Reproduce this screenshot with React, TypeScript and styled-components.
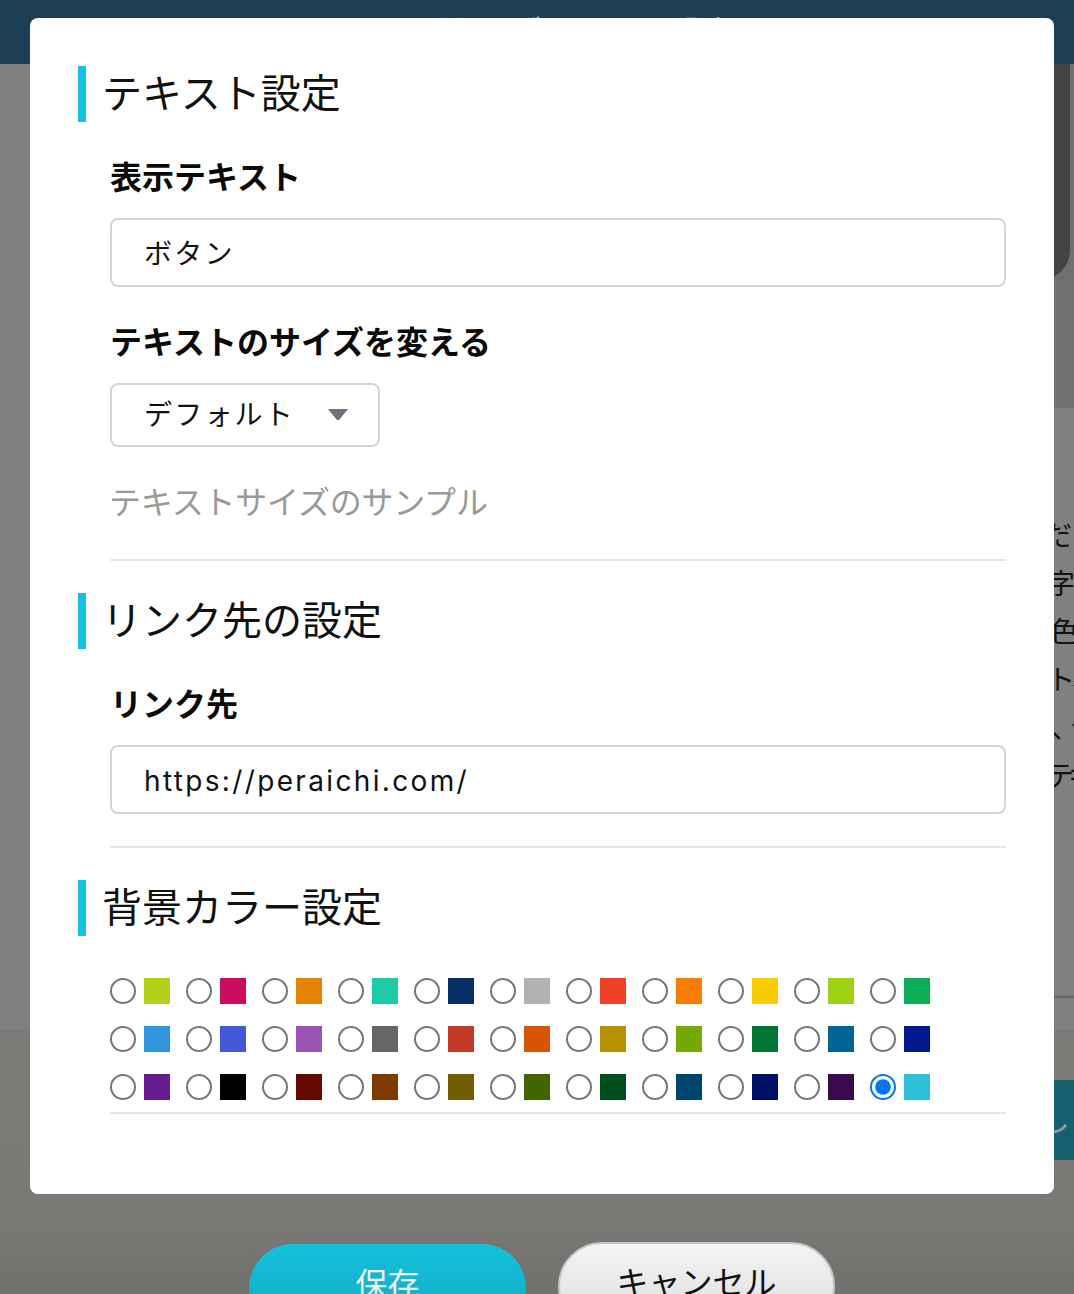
import React, { useState } from 'react';
import styled, { createGlobalStyle } from 'styled-components';

const GlobalStyle = createGlobalStyle`
  html, body {
    margin: 0;
    padding: 0;
    background: #808080;
  }
  * {
    box-sizing: border-box;
  }
`;

const FONT = `Inter, "Noto Sans CJK JP", sans-serif`;

const Page = styled.div`
  position: relative;
  width: 1074px;
  height: 1294px;
  overflow: hidden;
  background: #808080;
  font-family: ${FONT};
  color: #111;
`;

/* page behind the modal */
const Header = styled.header`
  height: 64px;
  padding-left: 415px;
  background: #1d3f56;
  color: #bbb;
  font-size: 32px;
  line-height: 65px;
  white-space: nowrap;
`;

const Hero = styled.section`
  height: 344px;
  margin-left: 400px;
  background: #707070;
`;

const HeroImage = styled.div`
  width: 670px;
  height: 216px;
  background: #444;
  border-bottom-right-radius: 30px;
`;

const Description = styled.section`
  height: 622px;
  padding-top: 104px;
  font-size: 28px;
  line-height: 48px;
  white-space: nowrap;
  color: #111;
`;

const DescriptionLine = styled.div<{ $indent: number; $tight?: number }>`
  padding-left: ${(p) => p.$indent}px;
  letter-spacing: ${(p) => p.$tight ?? 0}px;
`;

const DescriptionRule = styled.hr`
  margin: 196px 0 0 900px;
  border: 0;
  height: 2px;
  background: #666;
`;

const Footer = styled.section`
  height: 264px;
  padding-top: 50px;
  background: linear-gradient(#7c7b77, #7a7975 70%, #71706c);
`;

const NextButton = styled.div`
  width: 100px;
  height: 80px;
  margin-left: 1000px;
  padding-left: 38px;
  background: #14616f;
  color: #999;
  font-size: 32px;
  line-height: 80px;
`;

const FooterActions = styled.div`
  display: flex;
  gap: 32px;
  margin-top: 84px;
  padding-left: 249px;
`;

const PillButton = styled.button<{ $primary?: boolean }>`
  flex: none;
  width: 277px;
  height: 88px;
  padding: 0 0 6px;
  border-radius: 44px;
  font-family: ${FONT};
  font-size: 32px;
  line-height: 48px;
  ${(p) =>
    p.$primary
      ? `
    border: 0;
    align-self: flex-start;
    color: #eee;
    background: linear-gradient(#13c1dd, #14a8c2);
  `
      : `
    margin-top: -2px;
    border: 2px solid #c4c4cc;
    color: #111;
    background: linear-gradient(#f4f4f4, #dcdcdc);
  `}
`;

/* modal */
const Modal = styled.div`
  position: absolute;
  top: 18px;
  left: 30px;
  width: 1024px;
  height: 1176px;
  padding: 48px;
  background: #fff;
  border-radius: 8px;
`;

const SectionTitle = styled.h2`
  margin: 0;
  height: 56px;
  padding-left: 16px;
  border-left: 8px solid #14c1de;
  font-size: 40px;
  font-weight: 400;
  line-height: 56px;
  color: #111;
`;

const Body = styled.div`
  padding: 0 0 0 32px;
`;

const Label = styled.label`
  display: block;
  margin: 32px 0 16px;
  font-size: 32px;
  font-weight: 700;
  line-height: 48px;
  color: #0a0a0a;
`;

const TextInput = styled.input<{ $latin?: boolean }>`
  display: block;
  width: 100%;
  height: 69px;
  padding: ${(p) => (p.$latin ? '2px 32px 0' : '0 32px 2px')};
  border: 2px solid #d0d4de;
  border-radius: 8px;
  background: #fff;
  font-family: ${FONT};
  font-size: 28px;
  letter-spacing: ${(p) => (p.$latin ? 2.35 : 2.2)}px;
  color: #111;
  outline: none;
`;

const SelectWrap = styled.div`
  position: relative;
  width: 270px;
  height: 64px;
`;

const Select = styled.select`
  display: block;
  width: 100%;
  height: 100%;
  padding: 0 32px;
  border: 2px solid #d0d4de;
  border-radius: 8px;
  background: #fff;
  font-family: ${FONT};
  font-size: 28px;
  letter-spacing: 2.2px;
  color: #111;
  appearance: none;
  outline: none;
`;

const Caret = styled.svg`
  position: absolute;
  top: 26px;
  left: 218px;
  width: 20px;
  height: 11px;
  pointer-events: none;
`;

const Sample = styled.p`
  margin: 32px 0 32px -1px;
  font-size: 32px;
  line-height: 48px;
  letter-spacing: -0.2px;
  color: #999;
`;

const Divider = styled.hr`
  margin: 0 0 32px;
  border: 0;
  height: 2px;
  background: #e5e5e5;
`;

const InputDivider = styled(Divider)`
  margin-top: 32px;
`;

const ColorGrid = styled.div`
  display: grid;
  grid-template-columns: repeat(11, 76px);
  row-gap: 22px;
  margin-top: 42px;
`;

const ColorOption = styled.label`
  display: flex;
  align-items: center;
  gap: 8px;
  height: 26px;
`;

const Radio = styled.input`
  flex: none;
  zoom: 2;
  width: 13px;
  height: 13px;
  margin: 0;
`;

const Swatch = styled.span<{ $color: string }>`
  flex: none;
  width: 26px;
  height: 26px;
  background: ${(p) => p.$color};
`;

const GridDivider = styled(Divider)`
  margin-top: 12px;
`;

const COLORS = [
  '#b5d01b', '#cb0c60', '#e68200', '#1dcba7', '#062f66', '#b2b2b2', '#f04028', '#f97d00', '#fbcb02', '#9dd313', '#09ae56',
  '#3097de', '#4258d7', '#9a55b4', '#666666', '#c03a26', '#d75400', '#b79200', '#74a900', '#007534', '#006595', '#00198f',
  '#651d90', '#000000', '#640800', '#7d3b00', '#725e00', '#436500', '#004d1e', '#00456c', '#001066', '#380b4f', '#2cc1d9',
];

const App: React.FC = () => {
  const [bgColor, setBgColor] = useState<string>('#2cc1d9');
  const [label, setLabel] = useState<string>('ボタン');
  const [link, setLink] = useState<string>('https://peraichi.com/');

  return (
    <Page>
      <GlobalStyle />
      <Header>ボタンブロックの設定</Header>
      <Hero>
        <HeroImage />
      </Hero>
      <Description>
        <DescriptionLine $indent={1044}>だ</DescriptionLine>
        <DescriptionLine $indent={1047}>字</DescriptionLine>
        <DescriptionLine $indent={1050}>色</DescriptionLine>
        <DescriptionLine $indent={1047} $tight={-3}>ト、</DescriptionLine>
        <DescriptionLine $indent={1051} $tight={-9}>、テ</DescriptionLine>
        <DescriptionLine $indent={1046} $tight={-6}>テキ</DescriptionLine>
        <DescriptionRule />
      </Description>
      <Footer>
        <NextButton>し</NextButton>
        <FooterActions>
          <PillButton $primary>保存</PillButton>
          <PillButton>キャンセル</PillButton>
        </FooterActions>
      </Footer>

      <Modal>
        <SectionTitle>テキスト設定</SectionTitle>
        <Body>
          <Label htmlFor="label-text">表示テキスト</Label>
          <TextInput id="label-text" value={label} onChange={(e) => setLabel(e.target.value)} />
          <Label htmlFor="label-size">テキストのサイズを変える</Label>
          <SelectWrap>
            <Select id="label-size" defaultValue="default">
              <option value="default">デフォルト</option>
            </Select>
            <Caret viewBox="0 0 20 11">
              <path d="M0 0h20L11.5 10.4a2 2 0 0 1-3 0z" fill="#6b7280" />
            </Caret>
          </SelectWrap>
          <Sample>テキストサイズのサンプル</Sample>
          <Divider />
        </Body>

        <SectionTitle>リンク先の設定</SectionTitle>
        <Body>
          <Label htmlFor="link-url">リンク先</Label>
          <TextInput $latin id="link-url" value={link} onChange={(e) => setLink(e.target.value)} />
          <InputDivider />
        </Body>

        <SectionTitle>背景カラー設定</SectionTitle>
        <Body>
          <ColorGrid>
            {COLORS.map((color) => (
              <ColorOption key={color}>
                <Radio
                  type="radio"
                  name="bg-color"
                  checked={bgColor === color}
                  onChange={() => setBgColor(color)}
                />
                <Swatch $color={color} />
              </ColorOption>
            ))}
          </ColorGrid>
          <GridDivider />
        </Body>
      </Modal>
    </Page>
  );
};

export default App;
